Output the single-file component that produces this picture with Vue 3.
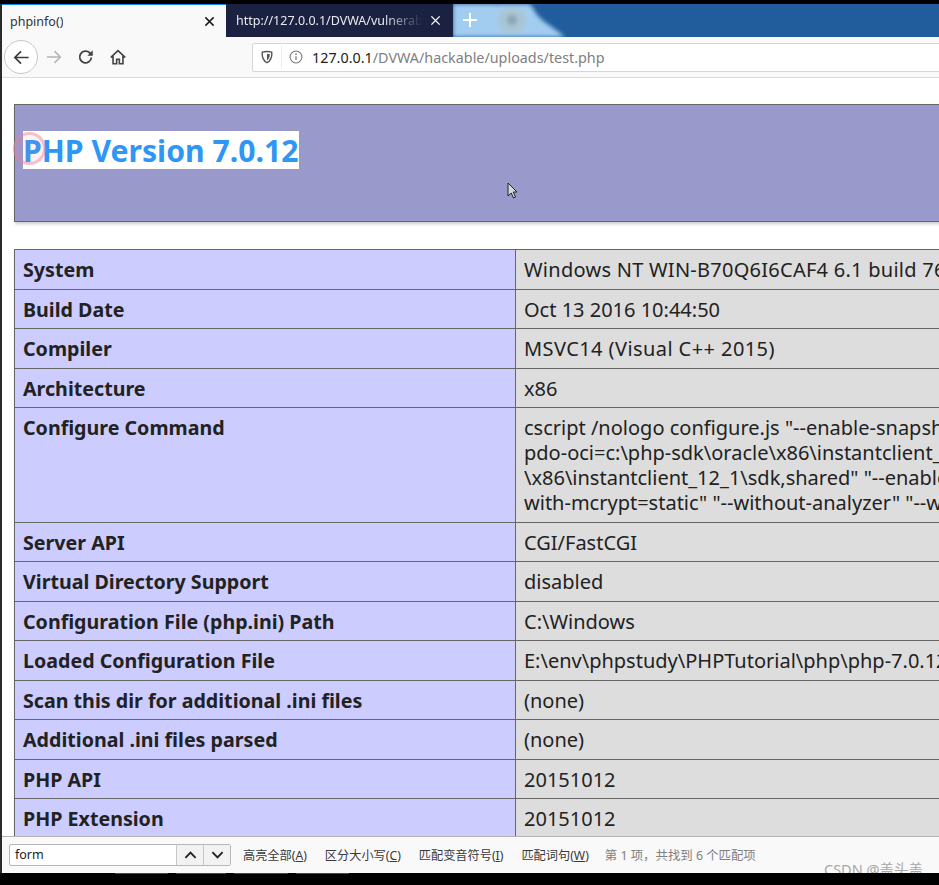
<script setup>
const rows = [
  { k: 'System', v: ['Windows NT WIN-B70Q6I6CAF4 6.1 build 7601 (Windows 7 Ultimate)'], tone: 'wide' },
  { k: 'Build Date', v: ['Oct 13 2016 10:44:50'] },
  { k: 'Compiler', v: ['MSVC14 (Visual C++ 2015)'], tone: 'wider' },
  { k: 'Architecture', v: ['x86'] },
  { k: 'Configure Command', v: [
    'cscript /nologo configure.js "--enable-snapshot-build" "--enable-debug-pack"',
    'pdo-oci=c:\\php-sdk\\oracle\\x86\\instantclient_12_1\\sdk,shared" "--with-oci8',
    '\\x86\\instantclient_12_1\\sdk,shared" "--enable-object-out-dir=../obj/"',
    'with-mcrypt=static" "--without-analyzer" "--with-pgo"'
  ], tall: true },
  { k: 'Server API', v: ['CGI/FastCGI'] },
  { k: 'Virtual Directory Support', v: ['disabled'] },
  { k: 'Configuration File (php.ini) Path', v: ['C:\\Windows'] },
  { k: 'Loaded Configuration File', v: ['E:\\env\\phpstudy\\PHPTutorial\\php\\php-7.0.12-nts\\php.ini'] },
  { k: 'Scan this dir for additional .ini files', v: ['(none)'] },
  { k: 'Additional .ini files parsed', v: ['(none)'] },
  { k: 'PHP API', v: ['20151012'] },
  { k: 'PHP Extension', v: ['20151012'] }
]
</script>

<template>
  <div class="screen">
    <div class="frame">
      <div class="tabstrip">
        <div class="tab active">
          <span class="tab-title">phpinfo()</span>
          <svg class="close" viewBox="0 0 12 12"><path d="M1.500 1.500l9 9M10.500 1.500l-9 9" stroke="#1a1a1a" stroke-width="1.600" fill="none"/></svg>
        </div>
        <div class="tab dark">
          <span class="tab-title fade">http://127.0.0.1/DVWA/vulnerab</span>
          <svg class="close" viewBox="0 0 12 12"><path d="M1.500 1.500l9 9M10.500 1.500l-9 9" stroke="#fff" stroke-width="1.500" fill="none"/></svg>
        </div>
        <div class="plus-area">
          <svg class="cloud" viewBox="0 0 130 33"><path d="M-4 -4h40c6 8 12 4 20 0c12 -2 22 2 26 12c8 12 22 16 34 29H-4z" fill="#a3cdf0"/><circle cx="59" cy="16" r="14" fill="#a8c6d6"/><circle cx="59" cy="16" r="5" fill="#8ba3b5"/></svg>
          <svg class="plus" viewBox="0 0 14 14"><path d="M7 0v14M0 7h14" stroke="#fff" stroke-width="2" fill="none"/></svg>
        </div>
      </div>

      <div class="toolbar">
        <div class="back">
          <svg viewBox="0 0 20 20"><path d="M17.500 10H3M9.500 3.500L3 10l6.500 6.500" stroke="#3c3c3c" stroke-width="1.800" fill="none"/></svg>
        </div>
        <svg class="tool fwd" viewBox="0 0 20 20"><path d="M2 10h15M10.500 3.500L17 10l-6.500 6.500" stroke="#b4b4b4" stroke-width="1.700" fill="none"/></svg>
        <svg class="tool reload" viewBox="0 0 20 20"><path d="M16 10.500a6.500 6.500 0 1 1-2-5.200L16.500 7.500" stroke="#444" stroke-width="2" fill="none"/><path d="M17.500 2.500v6h-6z" fill="#444"/></svg>
        <svg class="tool home" viewBox="0 0 20 20"><path d="M2 10.500L10 3l8 7.500M4.500 9v8.500h4v-5h3v5h4V9" stroke="#444" stroke-width="1.800" fill="none"/></svg>
        <div class="urlbar">
          <svg class="shield" viewBox="0 0 16 16"><path d="M2.500 2.500C6 1.500 10 1.500 13.500 2.500C13.800 8 12 12.500 8 14.500C4 12.500 2.200 8 2.500 2.500z" stroke="#555" stroke-width="1.600" fill="none"/><path d="M8 4.500h3.200C11.200 8 10 10.500 8 11.800z" fill="#555"/></svg>
          <span class="sep"></span>
          <svg class="info" viewBox="0 0 16 16"><circle cx="8" cy="8" r="6.800" stroke="#777" stroke-width="1.200" fill="none"/><path d="M8 7v4.500" stroke="#777" stroke-width="1.500"/><circle cx="8" cy="4.700" r="1" fill="#777"/></svg>
          <span class="url"><b>127.0.0.1</b><span>/DVWA/hackable/uploads/test.php</span></span>
        </div>
      </div>

      <div class="page">
        <div class="php-head">
          <h1><span class="hl">PHP Version 7.0.12</span><i class="click"></i></h1>
        </div>
        <div class="table">
          <div v-for="r in rows" :key="r.k" class="row" :class="{ tall: r.tall }">
            <div class="e">{{ r.k }}</div>
            <div class="v" :class="r.tone"><div v-for="l in r.v" :key="l" class="line">{{ l }}</div></div>
          </div>
        </div>
        <svg class="cursor" viewBox="0 0 12 18"><path d="M1 1v13l3.200-3 2.300 5 2-1-2.300-5H10z" fill="#d8d8d8" stroke="#222" stroke-width="1"/></svg>
      </div>

      <div class="findbar">
        <div class="find-group">
          <div class="find-input">form</div>
          <div class="find-btn"><svg viewBox="0 0 14 10"><path d="M1.500 8L7 2.500 12.500 8" stroke="#222" stroke-width="2" fill="none"/></svg></div>
          <div class="find-btn"><svg viewBox="0 0 14 10"><path d="M1.500 2L7 7.500 12.500 2" stroke="#222" stroke-width="2" fill="none"/></svg></div>
        </div>
        <span class="opt">高亮全部(<u>A</u>)</span>
        <span class="opt">区分大小写(<u>C</u>)</span>
        <span class="opt">匹配变音符号(<u>I</u>)</span>
        <span class="opt">匹配词句(<u>W</u>)</span>
        <span class="status">第 1 项，共找到 6 个匹配项</span>
        <span class="mark">CSDN @盖头盖</span>
      </div>
    </div>
    <div class="taskbar">
      <i class="seg-a"></i><i class="seg-b"></i><i class="seg-c"></i><i class="seg-a"></i>
    </div>
  </div>
</template>

<style scoped>
.screen {
  width: 939px;
  height: 885px;
  background: #000;
  padding-top: 4px;
  box-sizing: border-box;
  overflow: hidden;
  font-family: "Noto Sans", "Noto Sans CJK SC", sans-serif;
}
.frame {
  height: 869px;
  border-left: 2px solid #2a2a2a;
  display: flex;
  flex-direction: column;
  position: relative;
}
.tabstrip {
  height: 33px;
  flex: none;
  display: flex;
  background: #215d9c;
}
.tab {
  display: flex;
  align-items: center;
  justify-content: space-between;
  box-sizing: border-box;
  flex: none;
}
.tab.active {
  width: 224px;
  padding: 0 11px 0 8px;
  background: #f9f9fa;
  border-top: 1px solid #0a84ff;
  color: #333;
  font-size: 12.500px;
}
.tab.dark {
  width: 227px;
  padding: 0 12px 0 10px;
  background: #1b2140;
  color: #e8e8ee;
  font-size: 12.500px;
}
.tab-title { white-space: nowrap; overflow: hidden; }
.fade {
  width: 190px;
  -webkit-mask-image: linear-gradient(90deg, #000 78%, transparent 98%);
  mask-image: linear-gradient(90deg, #000 78%, transparent 98%);
}
.close { width: 11px; height: 11px; flex: none; }
.plus-area {
  width: 130px;
  flex: none;
  position: relative;
  overflow: hidden;
  background: #215d9c;
}
.cloud { position: absolute; left: 0; top: 0; width: 130px; height: 33px; filter: blur(2px); }
.plus { position: absolute; z-index: 1; left: 10px; top: 9px; width: 14px; height: 14px; }
.toolbar {
  height: 41px;
  flex: none;
  box-sizing: border-box;
  background: #f9f9fa;
  border-bottom: 1px solid #dcdcde;
  display: flex;
  align-items: center;
  padding-left: 2px;
}
.back {
  width: 32px;
  height: 32px;
  border: 1px solid #c8c8c8;
  border-radius: 50%;
  background: #fff;
  display: flex;
  align-items: center;
  justify-content: center;
  flex: none;
}
.back svg { width: 19px; height: 19px; }
.tool { width: 18px; height: 18px; flex: none; }
.fwd { margin-left: 7px; }
.reload { margin-left: 14px; }
.home { margin-left: 14px; }
.urlbar {
  margin-left: 125px;
  flex: 1;
  height: 29px;
  margin-right: -4px;
  box-sizing: border-box;
  background: #fff;
  border: 1px solid #d6d6d6;
  border-radius: 2px;
  display: flex;
  align-items: center;
  padding-left: 7px;
  min-width: 0;
}
.shield { width: 14px; height: 14px; flex: none; }
.sep { width: 1px; height: 22px; background: #ececec; margin: 0 7px; flex: none; }
.info { width: 14px; height: 14px; flex: none; }
.url { margin-left: 9px; font-size: 14.350px; color: #808080; white-space: nowrap; }
.url b { font-weight: 400; color: #222; }
.page {
  flex: 1;
  min-height: 0;
  background: #fff;
  overflow: hidden;
  position: relative;
  padding: 26px 0 0 12px;
  width: 1400px;
}
.php-head {
  height: 118px;
  box-sizing: border-box;
  background: #9999cc;
  border: 1px solid #666;
  box-shadow: 1px 2px 3px #ccc;
  padding: 26px 0 0 8px;
}
h1 {
  margin: 0;
  font-size: 30.200px;
  line-height: 36px;
  font-weight: 700;
  color: #2e96f5;
  position: relative;
  display: block;
}
.hl { background: #fff; display: inline-block; padding-top: 2px; }
.click {
  position: absolute;
  left: -10px;
  top: 1px;
  width: 33px;
  height: 33px;
  border: 3px solid rgba(235, 130, 150, .45);
  border-radius: 50%;
  background: rgba(235, 130, 150, .1);
  box-sizing: border-box;
  filter: blur(.6px);
}
.table {
  margin-top: 27px;
  border-top: 1px solid #666;
  border-left: 1px solid #666;
  box-shadow: 1px 2px 3px #ccc;
  font-size: 20px;
  line-height: 25px;
  color: #222;
}
.row {
  display: grid;
  grid-template-columns: 501px 1fr;
  height: 39.500px;
  box-sizing: border-box;
  border-bottom: 1px solid #666;
}
.row.tall { height: 114.500px; }
.e {
  background: #ccccff;
  border-right: 1px solid #666;
  font-weight: 700;
  font-size: 19.650px;
  padding: 7px 0 0 8px;
  color: #222;
}
.v {
  background: #dddddd;
  padding: 7px 0 0 8px;
  white-space: nowrap;
}
.v.wide { letter-spacing: .26px; }
.v.wider { letter-spacing: .42px; }
.cursor { position: absolute; left: 505px; top: 104px; width: 12px; height: 18px; }
.findbar {
  height: 37px;
  flex: none;
  box-sizing: border-box;
  background: #f9f9fa;
  border-top: 1px solid #b5b5b5;
  display: flex;
  align-items: center;
  padding-left: 7px;
  position: relative;
  font-size: 12.200px;
  color: #3a3a3a;
}
.find-group {
  display: flex;
  height: 22px;
  border: 1px solid #b8b8b8;
  border-radius: 2px;
  background: #fff;
  width: 222px;
  box-sizing: border-box;
  flex: none;
}
.find-input {
  flex: 1;
  font-size: 12.500px;
  line-height: 20px;
  padding-left: 5px;
  color: #222;
}
.find-btn {
  width: 27px;
  box-sizing: border-box;
  border-left: 1px solid #c8c8c8;
  background: #f2f2f3;
  display: flex;
  align-items: center;
  justify-content: center;
}
.find-btn svg { width: 13px; height: 10px; }
.opt { margin-left: 12px; white-space: nowrap; margin-right: 6px; }
.opt + .opt { margin-left: 12px; }
.status { color: #808080; margin-left: 10px; white-space: nowrap; font-size: 12.400px; }
.mark {
  position: absolute;
  left: 822px;
  top: 23px;
  font-size: 14.500px;
  line-height: 18px;
  color: #a8a8a8;
  white-space: nowrap;
  height: 13px;
  overflow: hidden;
}
.taskbar {
  display: flex;
  gap: 8px;
  margin-left: 115px;
  height: 1px;
}
.taskbar i { display: block; background: #4a4a4a; }
.seg-a { width: 53px; }
.seg-b { width: 50px; }
.seg-c { width: 54px; }
</style>

<style>
html, body { margin: 0; background: #000; overflow: hidden; }
</style>
